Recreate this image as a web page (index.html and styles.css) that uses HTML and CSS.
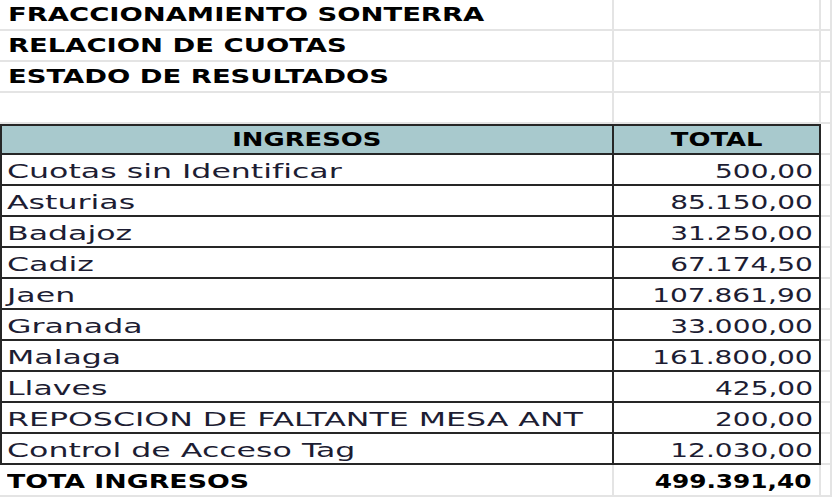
FILE: index.html
```html
<!DOCTYPE html>
<html lang="es">
<head>
<meta charset="utf-8">
<title>Fraccionamiento Sonterra</title>
<link rel="stylesheet" href="styles.css">
</head>
<body>
<div class="sheet">
  <div class="c title"><span class="t">FRACCIONAMIENTO SONTERRA</span></div><div class="c"></div><div class="c"></div>
  <div class="c title"><span class="t">RELACION DE CUOTAS</span></div><div class="c"></div><div class="c"></div>
  <div class="c title"><span class="t">ESTADO DE RESULTADOS</span></div><div class="c"></div><div class="c"></div>
  <div class="c"></div><div class="c"></div><div class="c"></div>

  <div class="c tA head"><span class="t">INGRESOS</span></div><div class="c tB head"><span class="t">TOTAL</span></div><div class="c"></div>

  <div class="c tA lbl"><span class="t">Cuotas sin Identificar</span></div><div class="c tB num"><span class="t">500,00</span></div><div class="c"></div>
  <div class="c tA lbl"><span class="t">Asturias</span></div><div class="c tB num"><span class="t">85.150,00</span></div><div class="c"></div>
  <div class="c tA lbl"><span class="t">Badajoz</span></div><div class="c tB num"><span class="t">31.250,00</span></div><div class="c"></div>
  <div class="c tA lbl"><span class="t">Cadiz</span></div><div class="c tB num"><span class="t">67.174,50</span></div><div class="c"></div>
  <div class="c tA lbl"><span class="t">Jaen</span></div><div class="c tB num"><span class="t">107.861,90</span></div><div class="c"></div>
  <div class="c tA lbl"><span class="t">Granada</span></div><div class="c tB num"><span class="t">33.000,00</span></div><div class="c"></div>
  <div class="c tA lbl"><span class="t">Malaga</span></div><div class="c tB num"><span class="t">161.800,00</span></div><div class="c"></div>
  <div class="c tA lbl"><span class="t">Llaves</span></div><div class="c tB num"><span class="t">425,00</span></div><div class="c"></div>
  <div class="c tA lbl"><span class="t">REPOSCION DE FALTANTE MESA ANT</span></div><div class="c tB num"><span class="t">200,00</span></div><div class="c"></div>
  <div class="c tA lbl"><span class="t">Control de Acceso Tag</span></div><div class="c tB num"><span class="t">12.030,00</span></div><div class="c"></div>

  <div class="c total-lbl"><span class="t">TOTA INGRESOS</span></div><div class="c total-num"><span class="t">499.391,40</span></div><div class="c"></div>
</div>
</body>
</html>
```
FILE: styles.css
```css
html, body {
  margin: 0;
  padding: 0;
  background: #ffffff;
}

body {
  font-family: "DejaVu Sans", sans-serif;
  color: #1d1d33;
  overflow: hidden;
}

.sheet {
  display: grid;
  grid-template-columns: 614px 207px 11px;
  grid-template-rows: repeat(4, 31px) 31px repeat(10, 31px) 32px;
  width: 832px;
}

.c {
  box-sizing: border-box;
  border-right: 2px solid #e4e4e4;
  border-bottom: 2px solid #e4e4e4;
  display: flex;
  align-items: flex-end;
  line-height: 20px;
  white-space: nowrap;
  min-width: 0;
}

.t {
  display: inline-block;
  transform-origin: 0 50%;
}

/* Title rows */
.title {
  font-weight: bold;
  font-size: 20px;
  color: #000;
  padding: 0 0 5px 8px;
}
.title .t {
  transform: scaleX(1.37);
}

/* Table borders */
.tA {
  border-left: 2px solid #262626;
  border-right: 2px solid #262626;
  border-bottom: 2px solid #262626;
}
.tB {
  border-right: 2px solid #262626;
  border-bottom: 2px solid #262626;
}

/* Header */
.head {
  background: #a8c9cd;
  border-top: 2px solid #262626;
  font-weight: bold;
  font-size: 19px;
  color: #000;
  justify-content: center;
  padding-bottom: 4px;
}
.head .t {
  transform: scaleX(1.36);
  transform-origin: 50% 50%;
}

/* Labels */
.lbl {
  font-size: 20px;
  padding: 0 0 3px 5px;
}
.lbl .t {
  transform: scaleX(1.58);
}

/* Numbers */
.num {
  font-size: 20px;
  justify-content: flex-end;
  padding: 0 6px 3px 0;
}
.num .t {
  transform: scaleX(1.4);
  transform-origin: 100% 50%;
}

/* Total row */
.total-lbl {
  font-weight: bold;
  font-size: 20px;
  color: #000;
  padding: 0 0 4px 7px;
}
.total-lbl .t {
  transform: scaleX(1.34);
}

.total-num {
  font-weight: bold;
  font-size: 20px;
  color: #000;
  justify-content: flex-end;
  padding: 0 7px 4px 0;
}
.total-num .t {
  transform: scaleX(1.24);
  transform-origin: 100% 50%;
}
```
